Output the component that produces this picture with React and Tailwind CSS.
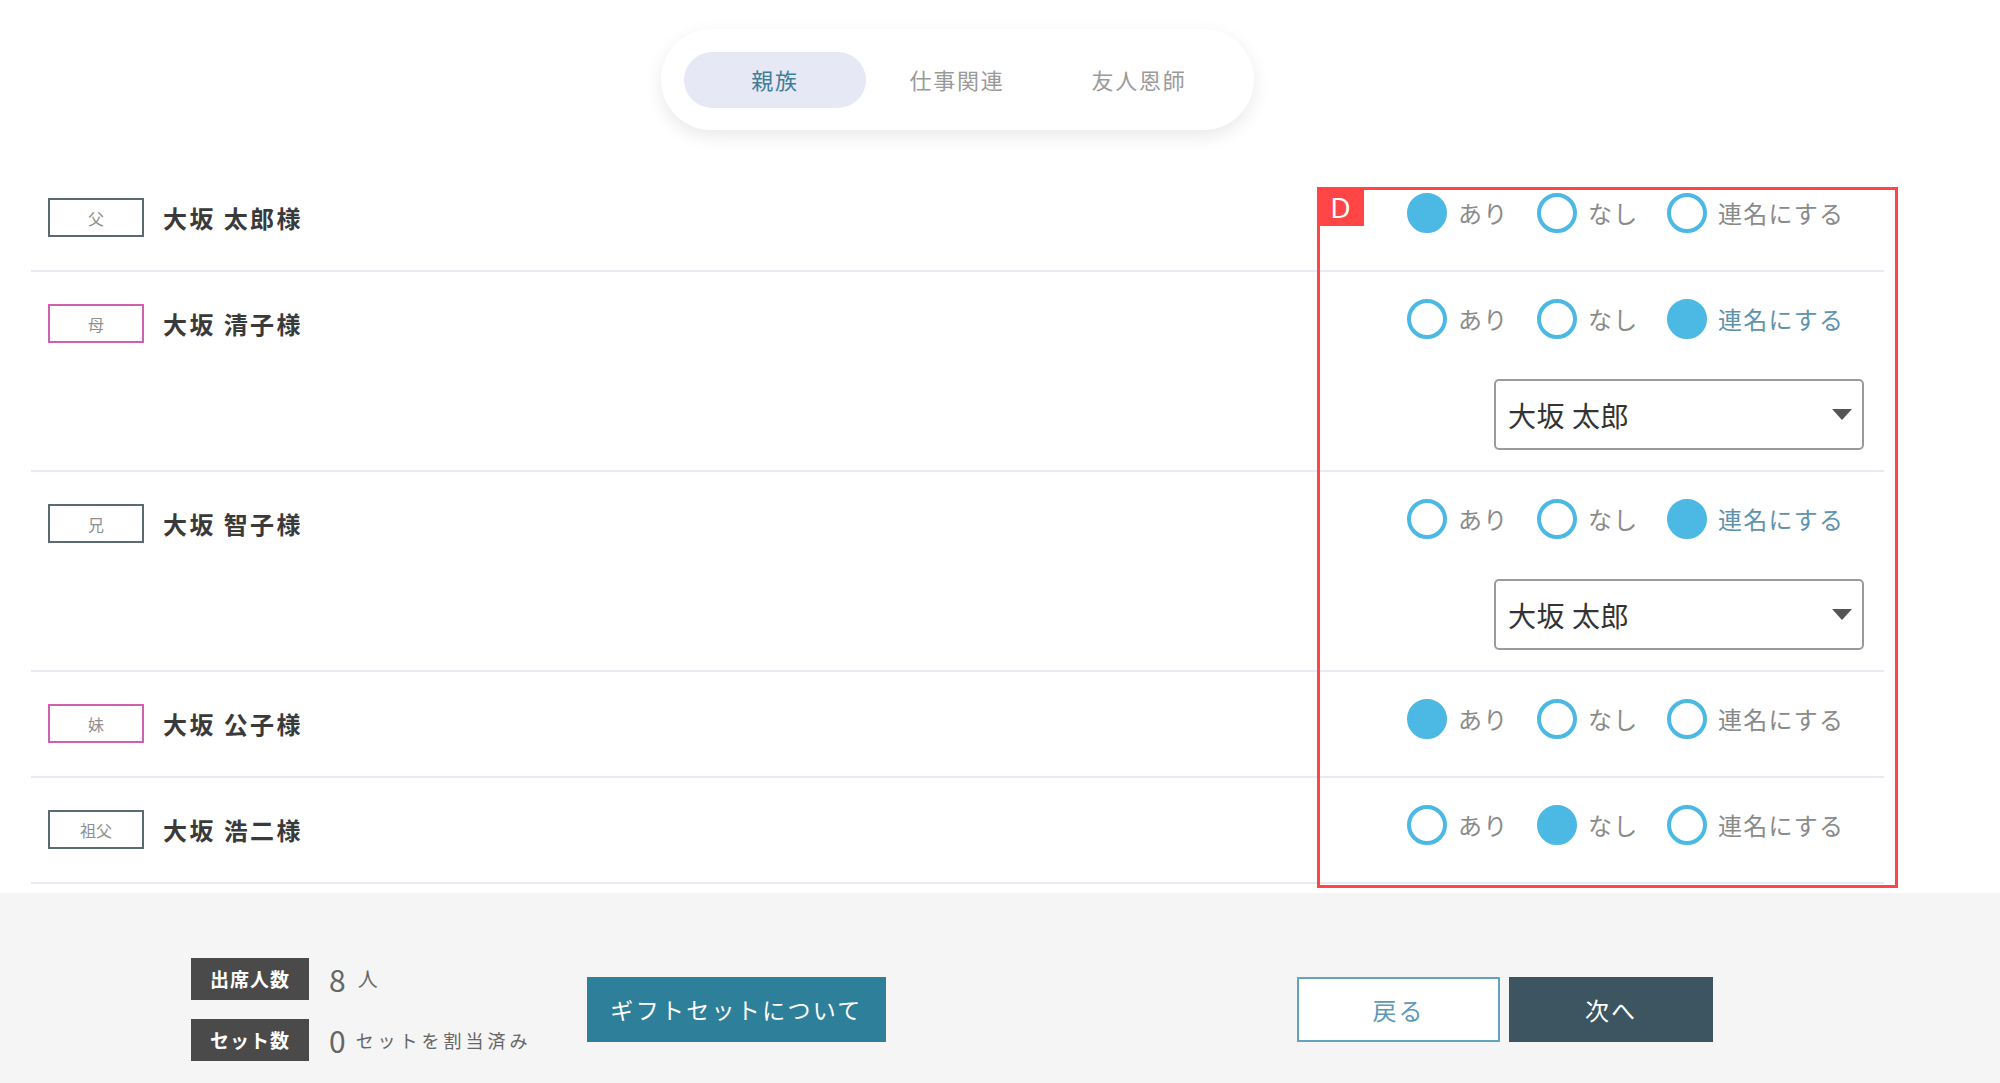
import React from 'react'

const tabs = ['親族', '仕事関連', '友人恩師']

const guests = [
  { id: 1, rel: '父', name: '大坂 太郎様', pink: false, choice: 0, joint: false },
  { id: 2, rel: '母', name: '大坂 清子様', pink: true, choice: 2, joint: true },
  { id: 3, rel: '兄', name: '大坂 智子様', pink: false, choice: 2, joint: true },
  { id: 4, rel: '妹', name: '大坂 公子様', pink: true, choice: 0, joint: false },
  { id: 5, rel: '祖父', name: '大坂 浩二様', pink: false, choice: 1, joint: false },
]

const options = ['あり', 'なし', '連名にする']

function Radio({ label, checked, accent, last }) {
  return (
    <div className={`flex items-center gap-[11px] ${last ? '' : 'w-[130px]'}`}>
      <span
        className={`w-[40px] h-[40px] rounded-full border-[4px] border-[#4cb8e4] ${
          checked ? 'bg-[#4cb8e4]' : 'bg-white'
        }`}
      />
      <span
        className={`text-[24px] tracking-[0.05em] leading-none ${
          accent ? 'text-[#5f93ad]' : 'text-[#8a8a8a]'
        }`}
      >
        {label}
      </span>
    </div>
  )
}

function GuestRow({ guest }) {
  return (
    <div
      className={`flex justify-between border-b-2 border-[#e9ebf4] pt-[27px] ${
        guest.joint ? 'pb-[20px]' : 'pb-[37px]'
      }`}
    >
      {/* Relation + name */}
      <div className="h-[40px] pl-[17px]">
        <div className="flex items-center h-[39px] mt-[5px]">
          <span
            className={`w-[96px] h-[39px] border-2 flex items-center justify-center text-[16px] text-[#8f8f8f] ${
              guest.pink ? 'border-[#cf5fb3]' : 'border-[#5a6a72]'
            }`}
          >
            {guest.rel}
          </span>
          <span className="ml-[19px] text-[24px] font-bold tracking-[0.1em] text-[#3a3a3a]">
            {guest.name}
          </span>
        </div>
      </div>

      {/* Options */}
      <div className="w-[458px] mr-[19px]">
        <div className="flex items-center h-[40px]">
          {options.map((opt, i) => (
            <Radio
              key={opt}
              label={opt}
              checked={guest.choice === i}
              accent={guest.choice === i && i === 2}
              last={i === 2}
            />
          ))}
        </div>
        {guest.joint && (
          <div className="mt-[40px] ml-[87px] w-[370px] h-[71px] border-2 border-[#9b9b9b] rounded-[5px] flex items-center justify-between pl-[12px] pr-[10px]">
            <span className="text-[28px] text-[#333] tracking-[0.02em]">大坂 太郎</span>
            <svg width="20" height="11" viewBox="0 0 20 11">
              <path d="M0 0h20L10 11z" fill="#555" />
            </svg>
          </div>
        )}
      </div>
    </div>
  )
}

export default function App() {
  return (
    <div className="relative w-[2000px] h-[1083px] overflow-hidden bg-white flex flex-col font-['Noto_Sans_CJK_JP',sans-serif]">
      {/* Tabs */}
      <div className="pt-[29px] pl-[661px] flex">
        <div className="w-[593px] h-[101px] rounded-full bg-white shadow-[0_6px_18px_rgba(0,0,0,0.09)] flex items-center px-[23px]">
          {tabs.map((tab, i) => (
            <div
              key={tab}
              className={`w-[182px] h-[56px] rounded-full flex items-center justify-center text-[22px] tracking-[0.08em] ${
                i === 0 ? 'bg-[#e6e9f5] text-[#3f7d99]' : 'text-[#9a9a9a]'
              }`}
            >
              {tab}
            </div>
          ))}
        </div>
      </div>

      {/* Guest list */}
      <div className="mt-[36px] ml-[31px] w-[1853px]">
        {guests.map((g) => (
          <GuestRow key={g.id} guest={g} />
        ))}
      </div>

      {/* Footer */}
      <div className="mt-[9px] flex-1 bg-[#f5f5f5] flex items-center pt-[43px] pl-[191px]">
        <div className="w-[396px] flex flex-col gap-[19px]">
          <div className="flex items-center">
            <span className="w-[118px] h-[42px] bg-[#4a4a4a] text-white text-[19px] font-bold tracking-[0.05em] flex items-center justify-center">
              出席人数
            </span>
            <span className="ml-[20px] text-[30px] text-[#666] leading-none">8</span>
            <span className="ml-[12px] text-[20px] text-[#666]">人</span>
          </div>
          <div className="flex items-center">
            <span className="w-[118px] h-[42px] bg-[#4a4a4a] text-white text-[19px] font-bold tracking-[0.05em] flex items-center justify-center">
              セット数
            </span>
            <span className="ml-[20px] text-[30px] text-[#666] leading-none">0</span>
            <span className="ml-[10px] text-[18px] text-[#666] tracking-[0.22em]">セットを割当済み</span>
          </div>
        </div>

        <button className="w-[299px] h-[65px] bg-[#2e7f99] text-white text-[23px] tracking-[0.1em] flex items-center justify-center">
          ギフトセットについて
        </button>

        <button className="ml-[411px] w-[203px] h-[65px] bg-white border-2 border-[#62a4c0] text-[#5f98b5] text-[24px] tracking-[0.08em] flex items-center justify-center">
          戻る
        </button>
        <button className="ml-[9px] w-[204px] h-[65px] bg-[#3d5561] text-white text-[24px] tracking-[0.08em] flex items-center justify-center">
          次へ
        </button>
      </div>

      {/* Annotation overlay */}
      <div className="absolute left-[1317px] top-[187px] w-[581px] h-[701px] border-[3px] border-[#ff4545] pointer-events-none">
        <span className="absolute -left-[3px] -top-[3px] w-[47px] h-[39px] bg-[#ff4545] text-white text-[28px] leading-none flex items-center justify-center font-['Noto_Sans',sans-serif]">
          D
        </span>
      </div>
    </div>
  )
}
